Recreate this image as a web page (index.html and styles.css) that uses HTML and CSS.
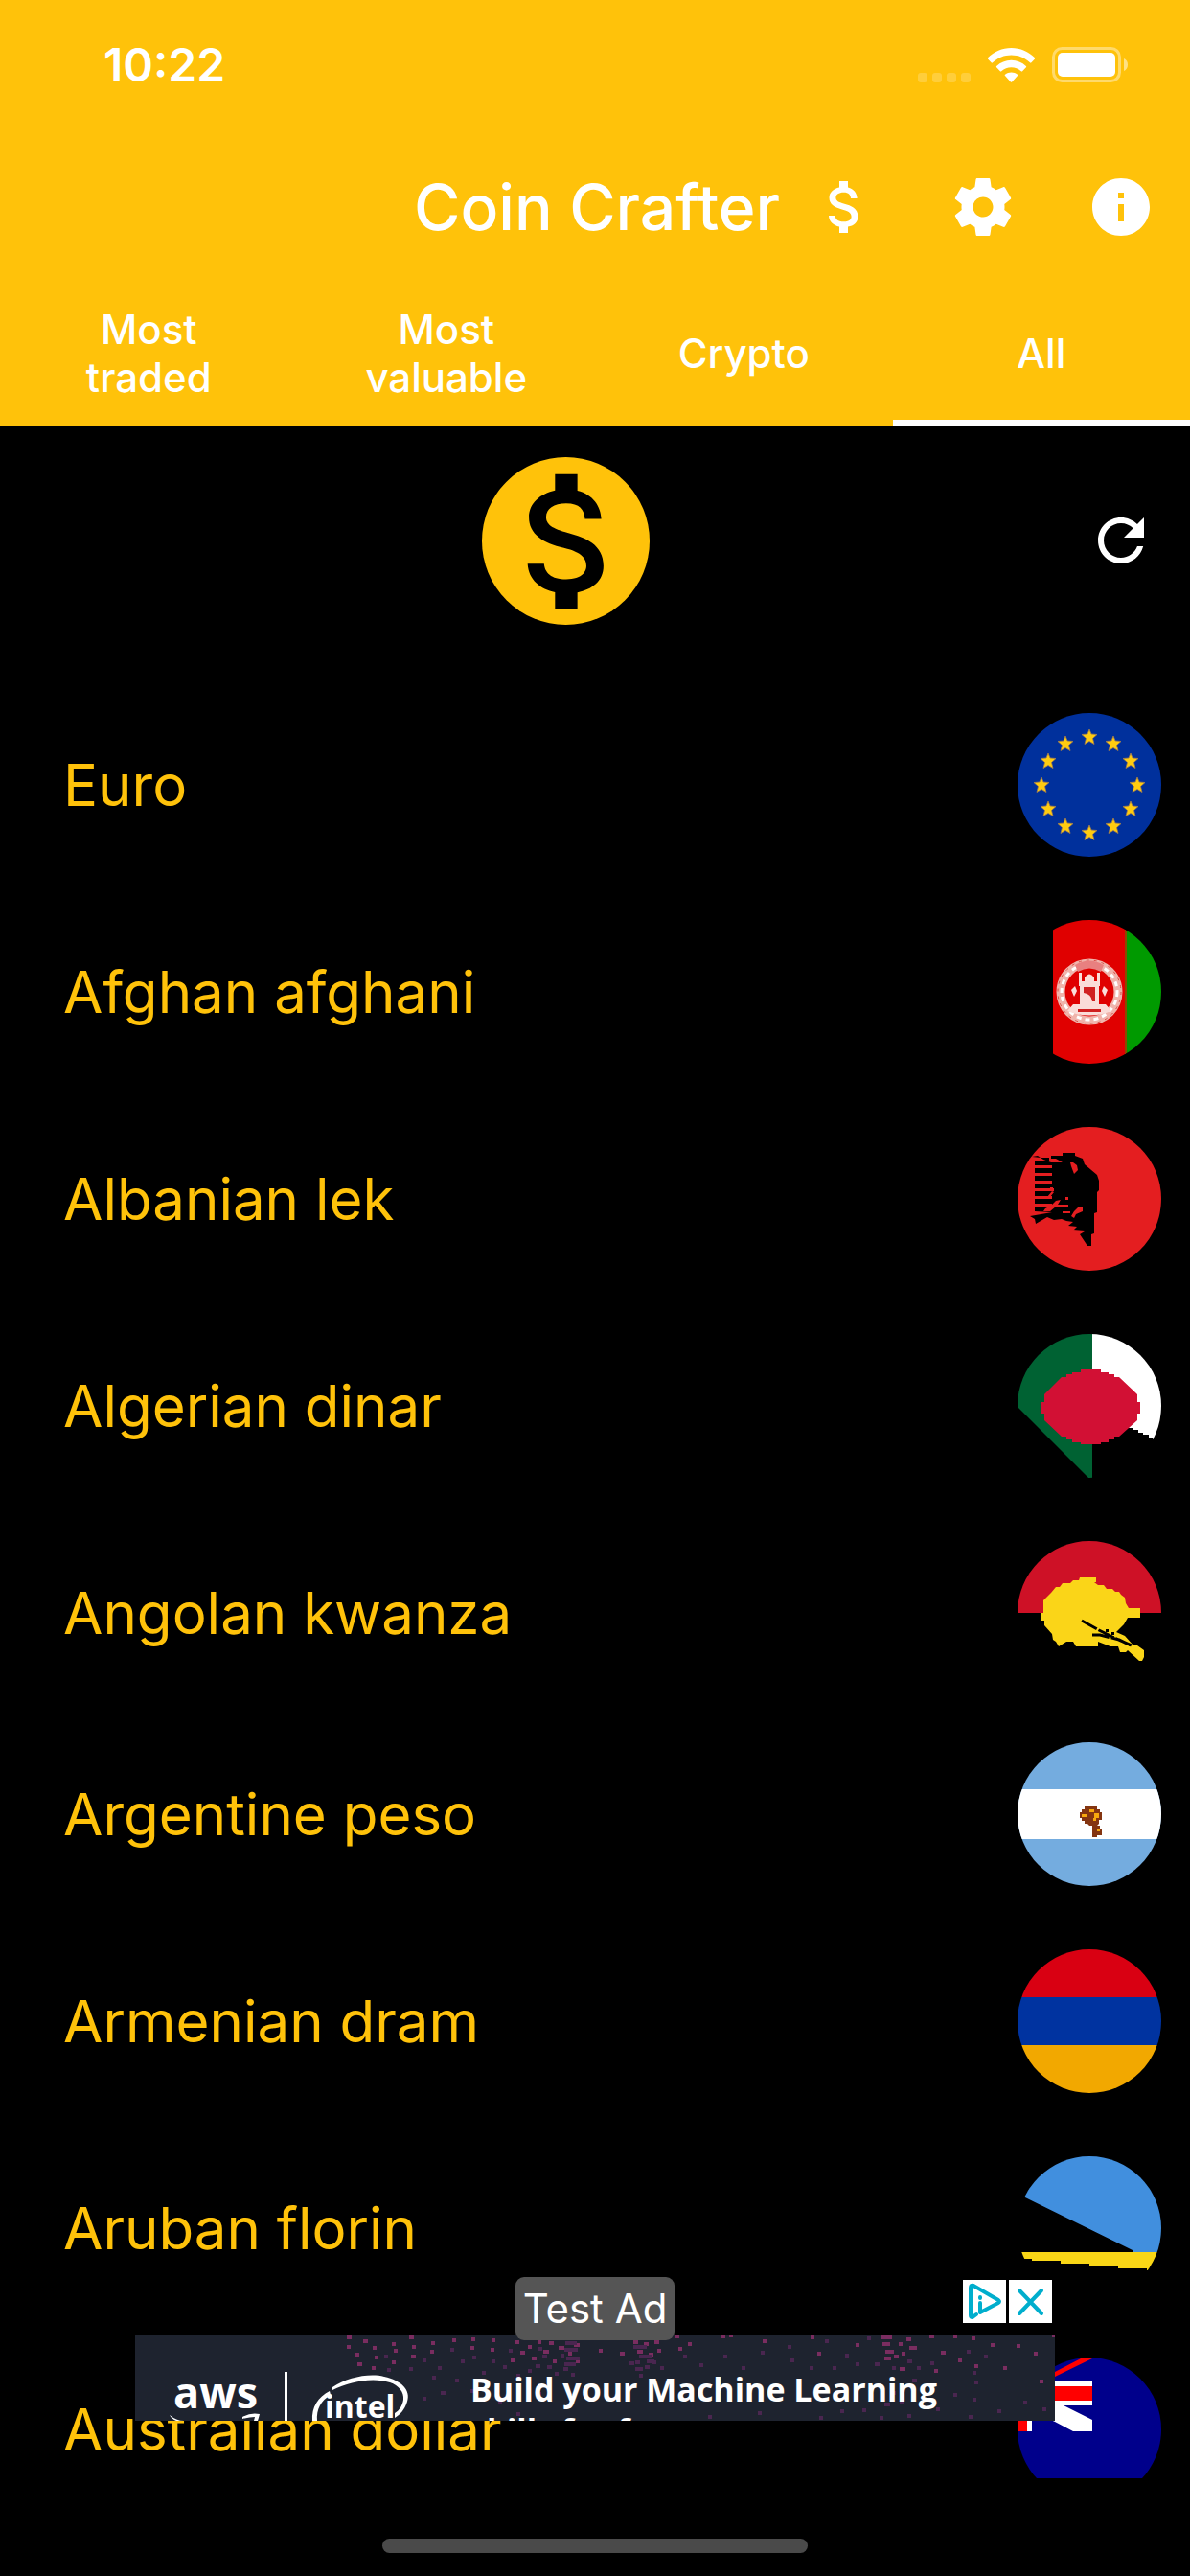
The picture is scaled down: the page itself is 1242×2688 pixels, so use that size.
FILE: index.html
```html
<!DOCTYPE html>
<html lang="en">
<head>
<meta charset="utf-8">
<meta name="viewport" content="width=device-width, initial-scale=1">
<title>Coin Crafter</title>
<link rel="stylesheet" href="styles.css">
</head>
<body>
<header class="header">
  <div class="status">
    <time class="clock">10:22</time>
    <div class="indicators">
      <svg class="cell" viewBox="0 0 55 10" aria-hidden="true"><rect width="10" height="10" rx="3"/><rect x="15" width="10" height="10" rx="3"/><rect x="30" width="10" height="10" rx="3"/><rect x="45" width="10" height="10" rx="3"/></svg>
      <svg class="wifi" viewBox="0 0 49 36" aria-hidden="true"><path d="M24.500 0C34 0 42.500 3.700 49 10.300a1 1 0 0 1 0 1.300l-3.600 3.700a1 1 0 0 1-1.400 0C38.500 10.300 32 7.600 24.500 7.600S10.500 10.300 5 15.300a1 1 0 0 1-1.400 0L0 11.600a1 1 0 0 1 0-1.300C6.500 3.700 15 0 24.500 0z"/><path d="M24.500 12.800c6 0 11.200 2.300 15.400 6.100a1 1 0 0 1 0 1.400l-3.800 3.900a1 1 0 0 1-1.300 0c-3-2.500-6.400-3.900-10.300-3.900s-7.300 1.400-10.300 3.900a1 1 0 0 1-1.300 0l-3.800-3.900a1 1 0 0 1 0-1.400c4.200-3.800 9.400-6.100 15.400-6.100z"/><path d="M24.500 25.600c2.400 0 4.600.7 6.500 2.200a.9.900 0 0 1 0 1.300l-5.800 6.300a1 1 0 0 1-1.400 0L18 29.100a.9.900 0 0 1 0-1.300c1.900-1.500 4.100-2.200 6.500-2.200z"/></svg>
      <svg class="battery" viewBox="0 0 79 37" aria-hidden="true"><rect x="1.500" y="1.500" width="69" height="34" rx="9" fill="none" stroke="#fff" stroke-opacity=".4" stroke-width="3"/><rect x="6" y="6" width="60" height="25" rx="5"/><path d="M75 12c2.500 1 4 3.500 4 6.500S77.500 24 75 25z" fill-opacity=".5"/></svg>
    </div>
  </div>
  <div class="toolbar">
    <h1 class="title">Coin Crafter</h1>
    <div class="actions">
      <button class="icon-button" type="button" aria-label="Currency"><svg class="icon" viewBox="0 0 24 24"><path id="dollar" d="M11.800 10.900c-2.270-.590-3-1.200-3-2.150 0-1.090 1.010-1.850 2.700-1.850 1.780 0 2.440.850 2.500 2.100h2.210c-.070-1.720-1.120-3.300-3.210-3.810V3h-3v2.160c-1.940.420-3.500 1.680-3.500 3.610 0 2.310 1.910 3.460 4.700 4.130 2.500.600 3 1.480 3 2.410 0 .690-.490 1.790-2.700 1.790-2.060 0-2.870-.920-2.980-2.100h-2.200c.120 2.190 1.760 3.420 3.680 3.830V21h3v-2.150c1.950-.370 3.500-1.500 3.500-3.550 0-2.840-2.430-3.810-4.700-4.400z"/></svg></button>
      <button class="icon-button" type="button" aria-label="Settings"><svg class="icon" viewBox="0 0 24 24"><path d="M19.430 12.980c.04-.32.07-.64.07-.98s-.03-.66-.07-.98l2.110-1.650c.19-.15.24-.42.12-.64l-2-3.460c-.12-.22-.39-.3-.61-.22l-2.490 1c-.52-.4-1.080-.73-1.690-.98l-.38-2.650C14.460 2.180 14.250 2 14 2h-4c-.25 0-.46.18-.49.42l-.38 2.650c-.61.25-1.170.59-1.690.98l-2.490-1c-.23-.09-.49 0-.61.22l-2 3.460c-.13.22-.07.49.12.64l2.110 1.650c-.04.32-.07.65-.07.98s.03.66.07.98l-2.110 1.650c-.19.15-.24.42-.12.64l2 3.460c.12.22.39.3.61.22l2.490-1c.52.4 1.080.73 1.690.98l.38 2.650c.03.24.24.42.49.42h4c.25 0 .46-.18.49-.42l.38-2.650c.61-.25 1.170-.59 1.690-.98l2.490 1c.23.09.49 0 .61-.22l2-3.460c.12-.22.07-.49-.12-.64l-2.110-1.650zM12 15.500c-1.930 0-3.500-1.570-3.500-3.500s1.570-3.500 3.500-3.500 3.500 1.570 3.500 3.500-1.570 3.500-3.500 3.500z"/></svg></button>
      <button class="icon-button" type="button" aria-label="About"><svg class="icon" viewBox="0 0 24 24"><path d="M12 2C6.480 2 2 6.480 2 12s4.480 10 10 10 10-4.480 10-10S17.520 2 12 2zm1 15h-2v-6h2v6zm0-8h-2V7h2v2z"/></svg></button>
    </div>
  </div>
  <div class="tabs" role="tablist">
    <button class="tab" type="button" role="tab">Most<br>traded</button>
    <button class="tab" type="button" role="tab">Most<br>valuable</button>
    <button class="tab" type="button" role="tab">Crypto</button>
    <button class="tab active" type="button" role="tab" aria-selected="true">All</button>
  </div>
</header>

<main class="content">
  <div class="hero">
    <div class="hero-main"><svg class="coin" viewBox="0 0 175 175" aria-hidden="true"><circle cx="87.500" cy="87.500" r="87.500" fill="#ffc20a"/><use href="#dollar" fill="#000" transform="translate(-1.500 -5.500) scale(7.780)"/></svg></div>
    <button class="icon-button" type="button" aria-label="Refresh"><svg class="icon" viewBox="0 0 24 24"><path d="M17.650 6.350C16.200 4.900 14.210 4 12 4c-4.420 0-7.990 3.580-7.990 8s3.570 8 7.990 8c3.730 0 6.840-2.550 7.730-6h-2.080c-.82 2.330-3.040 4-5.650 4-3.310 0-6-2.690-6-6s2.690-6 6-6c1.660 0 3.140.69 4.220 1.780L13 11h7V4l-2.350 2.350z"/></svg></button>
  </div>
  <ul class="list">
    <li><button class="row" type="button"><span>Euro</span>
      <svg class="flag" viewBox="0 0 150 150" aria-hidden="true"><rect width="150" height="150" fill="#00309c"/><defs><path id="star" d="M0-8 2-3 8-2.500 3.500 1.500 5 7.500 0 4.500-5 7.500-3.500 1.500-8-2.500-2-3z" fill="#ffcc10" stroke="#a07c50" stroke-width=".8"/></defs><use href="#star" x="75" y="25"/><use href="#star" x="100" y="32"/><use href="#star" x="118" y="50"/><use href="#star" x="125" y="75"/><use href="#star" x="118" y="100"/><use href="#star" x="100" y="118"/><use href="#star" x="75" y="125"/><use href="#star" x="50" y="118"/><use href="#star" x="32" y="100"/><use href="#star" x="25" y="75"/><use href="#star" x="32" y="50"/><use href="#star" x="50" y="32"/></svg></button></li>
    <li><button class="row" type="button"><span>Afghan afghani</span>
      <svg class="flag" viewBox="0 0 150 150" aria-hidden="true"><rect width="150" height="150"/><rect x="37" width="76" height="150" fill="#e00000"/><rect x="112" width="2" height="150" fill="#8a4a00"/><rect x="114" width="36" height="150" fill="#009a00"/><circle cx="75" cy="75" r="30" fill="none" stroke="#f0b4ac" stroke-width="9"/><circle cx="75" cy="75" r="29" fill="none" stroke="#fff" stroke-width="3" stroke-dasharray="5 4"/><circle cx="75" cy="75" r="33" fill="none" stroke="#d85048" stroke-width="1" stroke-dasharray="3 5"/><path d="M60 47q15-9 30 0l-3 7q-12-7-24 0z" fill="#e88080"/><path d="M64 55h3v9h3v-4q5-7 10 0v4h3v-9h3v14h-1v20h-20v-20h-1zM56 73l4-4 2 5-3 6zM94 73l-4-4-2 5 3 6zM58 88h34l6 7q-23 9-46 0z" fill="#fadcd8"/><path d="M69 70h12v15h-3q-1-8-9-9zM63 93h24v3H63z" fill="#d02020"/></svg></button></li>
    <li><button class="row" type="button"><span>Albanian lek</span>
      <svg class="flag" viewBox="0 0 150 150" aria-hidden="true"><rect width="150" height="150" fill="#e41e20"/><path d="M15 31l6-1 6 4 8 3h12l-7-4h-5v-3h12v-3h13v3l8 3 2 6 13 11 2 6v10l-2 2v21l-3 1v21l-3 1v12h-4l-8-12 5-3-12-1 4-4-9-1 5-4-7-1-5-2-8 1-7-3-12 7-1-5-5-3 23-4-18-1v-5h18v-3H18v-5h18v-3H18v-5h20v-3H18v-5h18v-3H18v-5h18v-3H18v-5h18v-3H18v-5h15v-3h-9z"/><path d="M37 37h18l1 4 3 8 4-4-1-5-4-3zM35 82l5-5 5-1-3 5h11v2H40l-6 5H27l2-3zM56 93l3-5 5-5h4v5l-7 3-2 4zM50 73h3v3h-3zM34 63h3v2h-3zM31 58h4v2h-4zM36 67l-5 6h3l4-5zM47 88h8v2h-8z" fill="#e41e20"/></svg></button></li>
    <li><button class="row" type="button"><span>Algerian dinar</span>
      <svg class="flag" viewBox="0 0 150 150" aria-hidden="true"><rect width="150" height="150"/><path d="M0 0h78v150h-4L0 76z" fill="#006233"/><path d="M78 0h72v110l-9 0v-2h-4v-3h-6v-2h-5v-3h-5v-2h-5v-3l-38-17z" fill="#fff"/><path d="M66 37h21v3h8v2h6v3h5l19 18v8h3v12h-3v7l-19 17h-5v3h-6v3h-8v2H66v-2h-9v-3h-6v-3h-5L28 90v-7h-3V71h3v-8l18-18h5v-3h6v-2h9z" fill="#d21034"/></svg></button></li>
    <li><button class="row compact" type="button"><span>Angolan kwanza</span>
      <svg class="flag" viewBox="0 0 150 150" aria-hidden="true"><rect width="150" height="150"/><rect width="150" height="75" fill="#ce1126"/><path d="M65 38h17v5h-2l4 3h6l3 4h6l3 3h4l2 3 4 3 1 6 3 5h12v10h-13l-4 7-8 8 9 4 9 10h4l7 5v7l-2 4h-3l-12-11-2 2h-6l-2-6h-8l-13-5v5H61l-3-5h-7l-8 5-3-5-3-2-1-6-8-9v-5h-3v-8h2V62l8-8 5-6h4l3-4h8l3-3h6z" fill="#fad518"/><path d="M67 83l18 10 14 7 20 9M78 98h8l20 5 12 6" fill="none" stroke="#000" stroke-width="3" stroke-dasharray="18 2"/><path d="M92 92h3v3h-3zM98 95h3v3h-3z"/></svg></button></li>
    <li><button class="row" type="button"><span>Argentine peso</span>
      <svg class="flag" viewBox="0 0 150 150" aria-hidden="true"><rect width="150" height="150" fill="#74acdf"/><rect y="49" width="150" height="52" fill="#fff"/><path d="M70 67h13v3h3v3h2v8h-3v4l-2 2h3v3h2v7h-5v2h-5V87h-3l-2-2h-3v-3h-3v-3h-2v-6h2v-3h3z" fill="#843511"/><path d="M75 70h5v3h-5zM67 75h6v3h-6zM80 74h5v5h-3v3h-3v-3h1zM83 90h3v3h-3z" fill="#f6a80e"/></svg></button></li>
    <li><button class="row" type="button"><span>Armenian dram</span>
      <svg class="flag" viewBox="0 0 150 150" aria-hidden="true"><rect width="150" height="50" fill="#d90012"/><rect y="50" width="150" height="50" fill="#0033a0"/><rect y="100" width="150" height="50" fill="#f2a800"/></svg></button></li>
    <li><button class="row compact" type="button"><span>Aruban florin</span>
      <svg class="flag" viewBox="0 0 150 150" aria-hidden="true"><rect width="150" height="150"/><path d="M0 0h150v100h-30v-2L8 43 0 39z" fill="#418fde"/><path d="M0 100h150v19h-15v-2h-30v-3H75v-2H45v-3H15v-2H0z" fill="#f9d616"/></svg></button></li>
    <li><button class="row" type="button"><span>Australian dollar</span>
      <svg class="flag" viewBox="0 0 150 150" aria-hidden="true"><rect width="150" height="150" fill="#00008b"/><path d="M0 25h78v25H48l30 15v12H58L39 67 0 50zM10 50h5v27h-5z" fill="#fff"/><path d="M0 30h78v15H0zM0 50h10v27H0zM68 0h10v1L39 20v-5z" fill="#f00"/></svg></button></li>
  </ul>

  <aside class="ad" aria-label="Advertisement">
    <div class="ad-top">
      <span class="ad-label">Test Ad</span>
      <div class="ad-controls">
        <button class="ad-control" type="button" aria-label="Ad choices"><svg viewBox="0 0 45 45"><path d="M14 36l-4 3q-2 0-2-2V8q0-3 3-2l26 15q2 1.500 0 3L18 34V24M18 18v1" fill="none" stroke="#00aecd" stroke-width="4" stroke-linecap="round" stroke-linejoin="round"/></svg></button>
        <button class="ad-control" type="button" aria-label="Close ad"><svg viewBox="0 0 45 45"><path d="M11 11l23 24M34 11L11 35" fill="none" stroke="#00aecd" stroke-width="4" stroke-linecap="round"/></svg></button>
      </div>
    </div>
    <a class="banner" href="#">
      <svg class="banner-art" viewBox="0 0 960 90" aria-hidden="true">
        <g fill="none" stroke-width="4">
          <path stroke="#7a2d60" d="M221 3h5M221 13h4M238 7h5M248 14h4M230 21h4M232 31h5M250 24h4M247 35h4M257 46h4M268 10h4M270 17h4M268 29h4M286 3h5M289 13h4M288 23h5M309 9h4M308 18h4M331 6h4M351 5h4M350 14h4M372 6h4M371 16h4M396 8h5M402 19h5M410 13h4M414 25h5M420 8h4M426 18h6M432 9h5M436 28h4M442 14h6M448 4h5M452 20h4M458 11h6M460 28h4M392 27h4M484 17h4M506 20h5M520 8h5M524 18h6M531 10h5M536 21h5M542 8h5M545 17h4M549 4h5M564 2h4M567 15h4M577 10h4M612 2h4M620 1h4M655 7h4M705 3h4M712 20h4M752 11h4M778 3h12M780 10h8M783 18h9M782 25h7M792 23h5M798 36h6M805 5h5M808 14h8M797 10h4M800 20h4M829 2h5M841 19h5M834 38h4M854 2h4M859 27h4M873 4h4M876 33h4M893 11h4M920 12h4M938 20h4M906 35h4M944 49h4M957 1h3"/>
          <path stroke="#4a2650" d="M263 37h4M260 23h4M286 36h4M300 27h4M316 35h4M329 16h4M340 28h4M352 24h4M372 28h4M384 34h4M390 17h4M430 34h5M444 22h4M447 36h5M455 42h4M460 4h5M438 41h4M410 38h4M398 43h4M449 9h12M448 16h14M450 25h14M448 31h12M420 15h5M425 23h5M418 33h5M520 13h14M526 23h14M522 36h8M534 28h8M516 30h5M310 45h4M319 61h5M300 67h4M334 48h4M350 59h4M362 40h4M379 70h4M398 83h4M420 62h4M522 29h5M532 34h5M540 29h4M526 43h4M548 35h4M572 23h4M589 32h4M614 23h4M633 35h4M653 19h4M681 13h4M684 27h4M704 35h4M720 7h4M728 35h4M741 22h4M752 31h4M764 4h4M772 31h5M790 35h4M806 28h5M816 35h4M830 30h4M868 18h4M874 40h4M886 23h4M876 50h4M790 61h4M782 73h6M798 70h4M806 85h4M811 48h5M836 78h4M854 63h4M874 68h4M870 86h4M900 80h4M927 71h4M947 78h4M777 87h4M759 79h4M736 80h4M714 87h4M650 82h4M598 86h4"/>
        </g>
        <g fill="#fff">
          <text class="logo-text aws" x="40" y="77">aws</text>
          <path d="M36 84q7 6 15 6h-8q-5-2-7-6zM112 86q9-5 18-3-1 4-2 7h-4l1-4q-5 0-13 2zM156 39h3v51h-3z"/>
          <text class="logo-text intel" x="198" y="87">intel</text>
          <path d="M185 90c-1-14 6-25 18-31l1 4c-10 6-15 15-14 27zM206 55c15-10 38-15 54-11 18 4 28 14 24 26-3 9-7 13-13 17v-5c5-3 8-8 9-14 1-8-5-15-14-18-18-6-42-1-60 8z"/>
        </g>
      </svg>
      <span class="banner-text">Build your Machine Learning<br>skills for free</span>
    </a>
  </aside>
</main>

<footer class="home"><div class="home-bar"></div></footer>
</body>
</html>
```
FILE: styles.css
```css
* { box-sizing: border-box; }

body {
  margin: 0;
  height: 100vh;
  display: flex;
  flex-direction: column;
  background: #000;
  color: #ffc20a;
  font-family: Inter, "Liberation Sans", sans-serif;
}

button {
  margin: 0;
  padding: 0;
  border: 0;
  background: none;
  color: inherit;
  font: inherit;
}

svg { display: block; }

.header {
  flex: none;
  background: #ffc20a;
  color: #fff;
}

.status {
  display: flex;
  justify-content: space-between;
  height: 132px;
  padding: 36px 65px 36px 108px;
}

.clock {
  font-size: 48px;
  line-height: 64px;
  font-weight: 600;
}

.indicators {
  display: flex;
  align-items: flex-end;
  gap: 18px;
  height: 50px;
  fill: #fff;
}

.cell { width: 55px; height: 10px; fill-opacity: .2; }
.wifi { width: 49px; height: 36px; }
.battery { width: 79px; height: 37px; }

.toolbar {
  display: grid;
  grid-template-columns: 432px minmax(0, 1fr) 432px;
  align-items: center;
  height: 168px;
}

.title {
  grid-column: 2;
  margin: 0;
  text-align: center;
  white-space: nowrap;
  font-size: 66px;
  line-height: 84px;
  font-weight: 500;
}

.actions { display: flex; }

.icon-button {
  display: grid;
  place-items: center;
  width: 144px;
  height: 144px;
}

.icon {
  width: 72px;
  height: 72px;
  fill: #fff;
}

.tabs {
  display: grid;
  grid-template-columns: repeat(4, 1fr);
  height: 144px;
}

.tab {
  border-bottom: 6px solid transparent;
  font-size: 42px;
  line-height: 50px;
  font-weight: 500;
}

.active { border-bottom-color: #fff; }

.content {
  position: relative;
  flex: 1;
  min-height: 0;
  overflow: hidden;
}

.hero {
  display: flex;
  align-items: center;
  height: 240px;
  margin-bottom: 27px;
  padding-left: 83px;
}

.hero-main {
  flex: 1;
  display: grid;
  place-items: center;
}

.coin { width: 175px; height: 175px; }

.list {
  margin: 0;
  padding: 0;
  list-style: none;
}

.row {
  display: flex;
  align-items: center;
  justify-content: space-between;
  width: 100%;
  padding: 33px 30px 33px 66px;
  font-size: 60px;
  line-height: 72px;
  text-align: left;
}

.compact { padding-bottom: 27px; }

.flag {
  flex: none;
  width: 150px;
  height: 150px;
  border-radius: 50%;
}

.ad {
  position: absolute;
  bottom: 60px;
  left: 50%;
  width: 960px;
  margin-left: -480px;
}

.ad-top {
  display: grid;
  grid-template-columns: 1fr auto 1fr;
  align-items: start;
  height: 60px;
}

.ad-label {
  grid-column: 2;
  position: relative;
  z-index: 1;
  padding: 0 8px;
  border-radius: 9px;
  background: #555;
  color: #fff;
  font-size: 42px;
  line-height: 66px;
}

.ad-controls {
  justify-self: end;
  display: flex;
  gap: 3px;
  padding: 3px;
}

.ad-control {
  width: 45px;
  height: 45px;
  background: #fff;
}

.banner {
  position: relative;
  display: block;
  height: 90px;
  overflow: hidden;
  background: #1e232f;
  color: #fff;
  text-decoration: none;
}

.banner-art {
  position: absolute;
  inset: 0;
  width: 100%;
  height: 100%;
}

.logo-text {
  font-family: "Open Sans", sans-serif;
  font-weight: 700;
}

.aws { font-size: 45px; }
.intel { font-size: 32px; }

.banner-text {
  position: relative;
  display: block;
  padding: 36px 0 0 350px;
  font-family: "Open Sans", sans-serif;
  font-size: 34px;
  line-height: 43px;
  font-weight: 700;
  white-space: nowrap;
}

.home {
  flex: none;
  display: flex;
  justify-content: center;
  align-items: flex-end;
  height: 102px;
  padding-bottom: 24px;
}

.home-bar {
  width: 444px;
  height: 15px;
  border-radius: 8px;
  background: #4a4a4a;
}
```
